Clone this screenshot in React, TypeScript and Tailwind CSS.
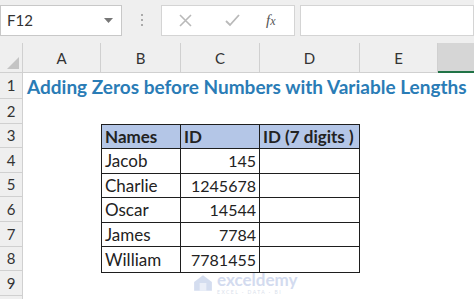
import React from 'react'

const cols = ['A', 'B', 'C', 'D', 'E']
const rowHeights = ['h-[26px]', 'h-[25px]', 'h-[24px]', 'h-[25px]', 'h-[24px]', 'h-[25px]', 'h-[25px]', 'h-[24px]', 'h-[25px]', 'h-[25px]']

const people = [
  { name: 'Jacob', id: '145' },
  { name: 'Charlie', id: '1245678' },
  { name: 'Oscar', id: '14544' },
  { name: 'James', id: '7784' },
  { name: 'William', id: '7781455' },
]

function FormulaBar() {
  return (
    <div className="flex h-[43px] items-start gap-0 bg-[#efefef] pt-[5px]">
      <div className="flex h-[31px] w-[122px] items-center justify-between border border-[#c8c8c8] bg-white pl-[6px] pr-[8px] text-[15px] text-[#333]">
        <span>F12</span>
        <svg width="9" height="6" viewBox="0 0 9 6">
          <path d="M0 0 L9 0 L4.5 5 Z" fill="#777" />
        </svg>
      </div>
      <div className="flex w-[39px] justify-center pt-[9px]">
        <div className="flex flex-col gap-[3px]">
          <span className="h-[2px] w-[2px] bg-[#aaa]" />
          <span className="h-[2px] w-[2px] bg-[#aaa]" />
          <span className="h-[2px] w-[2px] bg-[#aaa]" />
        </div>
      </div>
      <div className="flex h-[31px] w-[134px] items-center border border-[#d4d4d4] bg-white">
        <svg className="ml-[17px]" width="13" height="13" viewBox="0 0 13 13">
          <path d="M1 1 L12 12 M12 1 L1 12" stroke="#b9b9b9" strokeWidth="1.6" />
        </svg>
        <svg className="ml-[33px]" width="15" height="13" viewBox="0 0 15 13">
          <path d="M1 7 L5 11 L14 1" stroke="#b9b9b9" strokeWidth="1.8" fill="none" />
        </svg>
        <span className="ml-[26px] font-['Liberation_Serif',serif] text-[15px] italic text-[#555]">
          f<span className="text-[12px]">x</span>
        </span>
      </div>
      <div className="ml-[5px] h-[31px] flex-1 border border-[#d4d4d4] bg-white" />
    </div>
  )
}

function Watermark() {
  return (
    <div className="absolute left-[193px] top-[271px] flex items-center gap-[4px] opacity-60">
      <svg width="20" height="18" viewBox="0 0 18 16">
        <path d="M1 15 L1 7 L9 1 L17 7 L17 15 Z" fill="#b9c7e6" />
        <rect x="6" y="8" width="6" height="7" fill="#dfe6f5" />
      </svg>
      <div className="flex flex-col">
        <span className="text-[17px] leading-[18px] font-bold text-[#b6c4e6]">exceldemy</span>
        <span className="text-[5px] leading-[6px] tracking-[1.5px] text-[#c3cce0]">EXCEL · DATA · BI</span>
      </div>
    </div>
  )
}

export default function App() {
  return (
    <div className="relative h-[299px] w-[474px] overflow-hidden bg-white font-['Lato',sans-serif]">
      <FormulaBar />

      <div className="grid grid-cols-[23px_78px_80px_79px_100px_78px_1fr]">
        {/* column headers */}
        <div className="relative h-[30px] border-b border-r border-[#d0d0d0] bg-[#efefef]">
          <svg className="absolute bottom-[3px] right-[3px]" width="12" height="12" viewBox="0 0 12 12">
            <path d="M12 0 L12 12 L0 12 Z" fill="#c4c4c4" />
          </svg>
        </div>
        {cols.map((c) => (
          <div
            key={c}
            className="flex h-[30px] items-center justify-center border-b border-r border-[#d0d0d0] bg-[#efefef] pt-[2px] text-[15px] text-[#333]"
          >
            {c}
          </div>
        ))}
        <div className="h-[30px] border-b-2 border-[#217346] bg-[#d6d6d6]" />
      </div>

      <div className="flex">
        <div className="flex w-[23px] flex-col">
          {rowHeights.map((h, i) => (
            <div
              key={i}
              className={`${h} flex items-center justify-center border-b border-r border-[#d0d0d0] bg-[#efefef] text-[15px] text-[#333]`}
            >
              {i < 9 ? i + 1 : ''}
            </div>
          ))}
        </div>

        <div className="flex flex-1 flex-col">
          <div className="flex h-[26px] items-end pl-[4px] text-[19px] font-bold leading-none text-[#2a7cb6] whitespace-nowrap">
            <span className="pb-[3px]">Adding Zeros before Numbers with Variable Lengths</span>
          </div>
          <div className="h-[25px]" />

          <div className="ml-[78px] w-[259px] border-[1.5px] border-[#1e1e1e] text-[17px] text-[#222]">
            <div className="flex h-[24px] border-b-[1.5px] border-[#1e1e1e] bg-[#b4c6e7] font-bold">
              <div className="flex w-[79px] items-center border-r-[1.5px] border-[#1e1e1e] pl-[3px]">Names</div>
              <div className="flex w-[79px] items-center border-r-[1.5px] border-[#1e1e1e] pl-[3px]">ID</div>
              <div className="flex flex-1 items-center pl-[3px]">ID (7 digits )</div>
            </div>
            {people.map((p, i) => (
              <div
                key={p.name}
                className={`flex ${i % 2 === 0 ? 'h-[25px]' : 'h-[24px]'} ${i < people.length - 1 ? 'border-b-[1.5px] border-[#1e1e1e]' : ''}`}
              >
                <div className="flex w-[79px] items-center border-r-[1.5px] border-[#1e1e1e] pl-[3px]">{p.name}</div>
                <div className="flex w-[79px] items-center justify-end border-r-[1.5px] border-[#1e1e1e] pr-[3px] text-[16px]">{p.id}</div>
                <div className="flex-1" />
              </div>
            ))}
          </div>
        </div>
      </div>

      <Watermark />
    </div>
  )
}
